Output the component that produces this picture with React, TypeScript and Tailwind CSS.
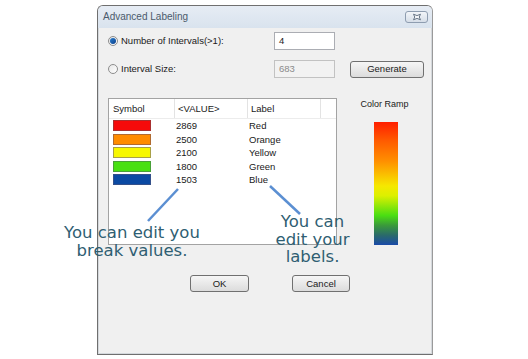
import React from "react";

const rows = [
  { c: "#f60a0a", b: "#a83030", v: "2869", l: "Red" },
  { c: "#ff8c00", b: "#b06a30", v: "2500", l: "Orange" },
  { c: "#f7f700", b: "#a8a048", v: "2100", l: "Yellow" },
  { c: "#48e012", b: "#48a038", v: "1800", l: "Green" },
  { c: "#0b4aa3", b: "#34508a", v: "1503", l: "Blue" },
];

function Radio({ checked }: { checked?: boolean }) {
  return (
    <div className="w-[10px] h-[10px] rounded-full border border-[#8d8d8d] bg-gradient-to-br from-[#e6e6e6] to-[#ffffff] flex items-center justify-center">
      {checked && <div className="w-[6px] h-[6px] rounded-full bg-gradient-to-br from-[#2a7fd0] to-[#0f3f8a]" />}
    </div>
  );
}

function Btn({ label, w }: { label: string; w: string }) {
  return (
    <div
      className={`${w} h-[17px] border border-[#707070] rounded-[3px] bg-gradient-to-b from-[#f6f6f6] to-[#dcdcdc] flex items-center justify-center text-[9.5px] text-[#1a1a1a] leading-none`}
    >
      {label}
    </div>
  );
}

export default function App() {
  return (
    <div
      className="relative w-[528px] h-[359px] bg-white overflow-hidden pt-[5px] pl-[97px]"
      style={{ fontFamily: '"Liberation Sans", Arial, sans-serif' }}
    >
      <div className="w-[336px] h-[350px] border border-[#6f6f6f] border-r-[#9a9a9a] rounded-t-[6px] bg-[#f0f0f0] flex flex-col shadow-[inset_0_0_0_1px_#d4d8dc]">
        {/* title bar */}
        <div className="h-[22px] rounded-t-[5px] bg-gradient-to-b from-[#e6ecf4] to-[#d9e3ee] flex items-center pl-[5px] pr-[4px]">
          <span className="text-[10px] text-[#4b5a6b] leading-none">Advanced Labeling</span>
          <div className="ml-auto w-[23px] h-[12px] border border-[#8e9db0] rounded-[3px] bg-gradient-to-b from-[#f2f5f9] to-[#d6dee8] flex items-center justify-center">
            <svg width="10" height="8" viewBox="0 0 10 8">
              <path d="M1.5 1.2 Q5 4 8.5 1.2 Q6 4 8.5 6.8 Q5 4 1.5 6.8 Q4 4 1.5 1.2 Z" fill="#f4f6f9" stroke="#6a7888" strokeWidth="1" />
            </svg>
          </div>
        </div>

        {/* body */}
        <div className="flex-1 pl-[10px] pt-[4px] text-[9.5px] text-[#1a1a1a] leading-none">
          <div className="flex items-center h-[18px]">
            <div className="w-[166px] flex items-center">
              <Radio checked />
              <span className="ml-[3px]">Number of Intervals(&gt;1):</span>
            </div>
            <div className="w-[61px] h-[18px] border border-[#abadb3] bg-white flex items-center px-[4px]">4</div>
          </div>

          <div className="flex items-center h-[18px] mt-[10px]">
            <div className="w-[166px] flex items-center">
              <Radio />
              <span className="ml-[3px]">Interval Size:</span>
            </div>
            <div className="w-[61px] h-[18px] border border-[#c2c2c2] bg-[#f2f2f2] flex items-center px-[4px] text-[#8a8a8a]">683</div>
            <div className="ml-[15px]">
              <Btn label="Generate" w="w-[74px]" />
            </div>
          </div>

          <div className="flex mt-[20px]">
            <div className="w-[229px] h-[147px] border border-[#a3a3a3] bg-white flex flex-col">
              <div className="h-[20px] border-b border-[#ececec] flex">
                <div className="w-[66px] border-r border-[#e3e3e3] flex items-center pl-[4px]">Symbol</div>
                <div className="w-[73px] border-r border-[#e3e3e3] flex items-center pl-[3px]">&lt;VALUE&gt;</div>
                <div className="w-[73px] border-r border-[#e3e3e3] flex items-center pl-[3px]">Label</div>
              </div>
              {rows.map((r) => (
                <div key={r.v} className="h-[13.5px] flex items-center">
                  <div className="w-[67px] pl-[4px]">
                    <div className="w-[38px] h-[11px] border" style={{ backgroundColor: r.c, borderColor: r.b }} />
                  </div>
                  <div className="w-[73px]">{r.v}</div>
                  <div>{r.l}</div>
                </div>
              ))}
            </div>
            <div className="w-[95px] flex flex-col">
              <div className="h-[12px] flex items-center justify-center text-[9px]">Color Ramp</div>
              <div className="mt-[12px] ml-[37px] w-[24px] h-[123px] bg-[linear-gradient(to_bottom,#ff1e00_0%,#ff5a00_15%,#ff9000_32%,#f6e800_52%,#dcf000_60%,#4ade12_76%,#3a9a3a_84%,#2a6a6a_92%,#1a4aa8_100%)]" />
            </div>
          </div>

          <div className="flex mt-[30px]">
            <div className="ml-[82px]">
              <Btn label="OK" w="w-[59px]" />
            </div>
            <div className="ml-[43px]">
              <Btn label="Cancel" w="w-[58px]" />
            </div>
          </div>
        </div>
      </div>

      {/* annotation lines */}
      <svg className="absolute left-0 top-0 pointer-events-none" width="528" height="359" viewBox="0 0 528 359">
        <line x1="178" y1="189" x2="148" y2="221" stroke="#5b8fd2" strokeWidth="2.5" />
        <line x1="270" y1="186" x2="300" y2="214" stroke="#5b8fd2" strokeWidth="2.5" />
      </svg>

      {/* annotation texts */}
      <div
        className="absolute left-[52px] top-[224px] w-[160px] text-center text-[16.5px] leading-[18px] text-[#2f5e72]"
        style={{ fontFamily: '"DejaVu Sans", Verdana, sans-serif' }}
      >
        You can edit you
        <br />
        break values.
      </div>
      <div
        className="absolute left-[262px] top-[213px] w-[101px] text-center text-[16.5px] leading-[17.5px] text-[#2f5e72]"
        style={{ fontFamily: '"DejaVu Sans", Verdana, sans-serif' }}
      >
        You can
        <br />
        edit your
        <br />
        labels.
      </div>
    </div>
  );
}
